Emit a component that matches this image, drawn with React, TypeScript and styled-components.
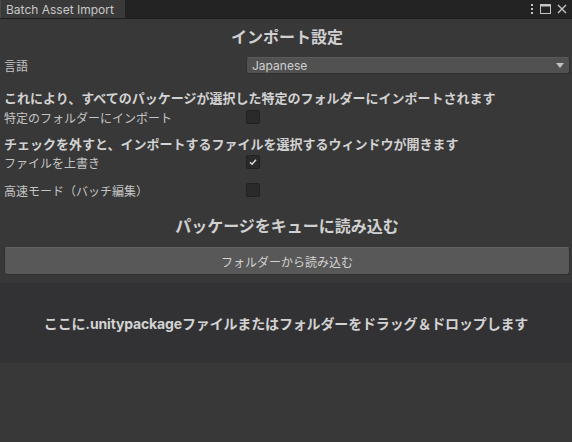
import React, { useState } from 'react'
import styled, { createGlobalStyle } from 'styled-components'

const GlobalStyle = createGlobalStyle`
  html, body {
    margin: 0;
    padding: 0;
    background: #383838;
  }
  body {
    font-family: Inter, 'Noto Sans CJK JP', sans-serif;
    color: #c4c4c4;
  }
`

const Window = styled.div`
  width: 572px;
  height: 442px;
  background: #383838;
  display: flex;
  flex-direction: column;
  overflow: hidden;
`

const TabBar = styled.div`
  height: 19px;
  background: #232323;
  display: flex;
  align-items: stretch;
  justify-content: space-between;
  border-bottom: 1px solid #1e1e1e;
  box-sizing: border-box;
`

const Tab = styled.div`
  width: 125px;
  background: #3a3a3a;
  border-left: 1px solid #4a4a4a;
  color: #c8c8c8;
  font-size: 12px;
  line-height: 19px;
  padding-left: 5px;
  box-sizing: border-box;
`

const TabTools = styled.div`
  display: flex;
  align-items: center;
  gap: 6px;
  padding-right: 5px;
`

const Content = styled.div`
  padding: 7px 2px 0 4px;
  display: flex;
  flex-direction: column;
`

const Heading = styled.div<{ $top: number }>`
  margin-top: ${(p) => p.$top}px;
  height: 22px;
  line-height: 22px;
  text-align: center;
  font-size: 16px;
  font-weight: 700;
  color: #d0d0d0;
`

const Row = styled.div<{ $top?: number }>`
  margin-top: ${(p) => p.$top ?? 0}px;
  height: 18px;
  display: grid;
  grid-template-columns: 242px 1fr;
  align-items: center;
  font-size: 12px;
`

const Info = styled.div<{ $top: number }>`
  margin-top: ${(p) => p.$top}px;
  height: 18px;
  line-height: 18px;
  font-size: 13px;
  font-weight: 700;
  color: #d2d2d2;
  white-space: nowrap;
`

const Select = styled.div`
  height: 17px;
  background: #515151;
  border: 1px solid #303030;
  border-top-color: #5a5a5a;
  border-radius: 3px;
  box-sizing: border-box;
  display: flex;
  align-items: center;
  justify-content: space-between;
  padding: 0 5px 0 5px;
  color: #d0d0d0;
  font-size: 12px;
`

const Arrow = styled.span`
  width: 0;
  height: 0;
  border-left: 4px solid transparent;
  border-right: 4px solid transparent;
  border-top: 5px solid #c4c4c4;
`

const Box = styled.button<{ $on: boolean }>`
  width: 14px;
  height: 14px;
  padding: 0;
  margin: 0;
  background: #2a2a2a;
  border: 1px solid #212121;
  border-radius: 2px;
  display: flex;
  align-items: center;
  justify-content: center;
  cursor: pointer;
`

const Button = styled.button`
  margin-top: 10px;
  height: 28px;
  width: 100%;
  background: #585858;
  border: 1px solid #303030;
  border-top-color: #616161;
  border-radius: 3px;
  color: #d2d2d2;
  font-family: inherit;
  font-size: 12px;
`

const DropZone = styled.div`
  margin-top: 8px;
  height: 80px;
  background: #323234;
  display: flex;
  align-items: center;
  justify-content: center;
  font-size: 14px;
  letter-spacing: -0.15px;
  font-weight: 700;
  color: #d2d2d2;
`

const Check = ({ on, onClick }: { on: boolean; onClick: () => void }) => (
  <Box $on={on} onClick={onClick}>
    {on && (
      <svg width="10" height="10" viewBox="0 0 10 10">
        <path d="M2 5.2 L4.1 7.2 L8 2.8" fill="none" stroke="#e0e0e0" strokeWidth="1.4" />
      </svg>
    )}
  </Box>
)

const App = () => {
  const [toFolder, setToFolder] = useState(false)
  const [overwrite, setOverwrite] = useState(true)
  const [fastMode, setFastMode] = useState(false)

  return (
    <Window>
      <GlobalStyle />
      <TabBar>
        <Tab>Batch Asset Import</Tab>
        <TabTools>
          <svg width="4" height="12" viewBox="0 0 4 12">
            <rect x="1" y="1" width="2" height="2" fill="#c4c4c4" />
            <rect x="1" y="5" width="2" height="2" fill="#c4c4c4" />
            <rect x="1" y="9" width="2" height="2" fill="#c4c4c4" />
          </svg>
          <svg width="11" height="10" viewBox="0 0 11 10">
            <rect x="0.5" y="0.5" width="10" height="9" fill="none" stroke="#c4c4c4" />
            <rect x="0.5" y="0.5" width="10" height="2" fill="#c4c4c4" />
          </svg>
          <svg width="10" height="10" viewBox="0 0 10 10">
            <path d="M1 1 L9 9 M9 1 L1 9" stroke="#c4c4c4" strokeWidth="1.4" />
          </svg>
        </TabTools>
      </TabBar>
      <Content>
        <Heading $top={0}>インポート設定</Heading>
        <Row $top={8}>
          <span>言語</span>
          <Select>
            <span>Japanese</span>
            <Arrow />
          </Select>
        </Row>
        <Info $top={15}>これにより、すべてのパッケージが選択した特定のフォルダーにインポートされます</Info>
        <Row $top={1}>
          <span>特定のフォルダーにインポート</span>
          <Check on={toFolder} onClick={() => setToFolder(!toFolder)} />
        </Row>
        <Info $top={9}>チェックを外すと、インポートするファイルを選択するウィンドウが開きます</Info>
        <Row>
          <span>ファイルを上書き</span>
          <Check on={overwrite} onClick={() => setOverwrite(!overwrite)} />
        </Row>
        <Row $top={10}>
          <span>高速モード（バッチ編集）</span>
          <Check on={fastMode} onClick={() => setFastMode(!fastMode)} />
        </Row>
        <Heading $top={16}>パッケージをキューに読み込む</Heading>
        <Button>フォルダーから読み込む</Button>
      </Content>
      <DropZone>ここに.unitypackageファイルまたはフォルダーをドラッグ＆ドロップします</DropZone>
    </Window>
  )
}

export default App
